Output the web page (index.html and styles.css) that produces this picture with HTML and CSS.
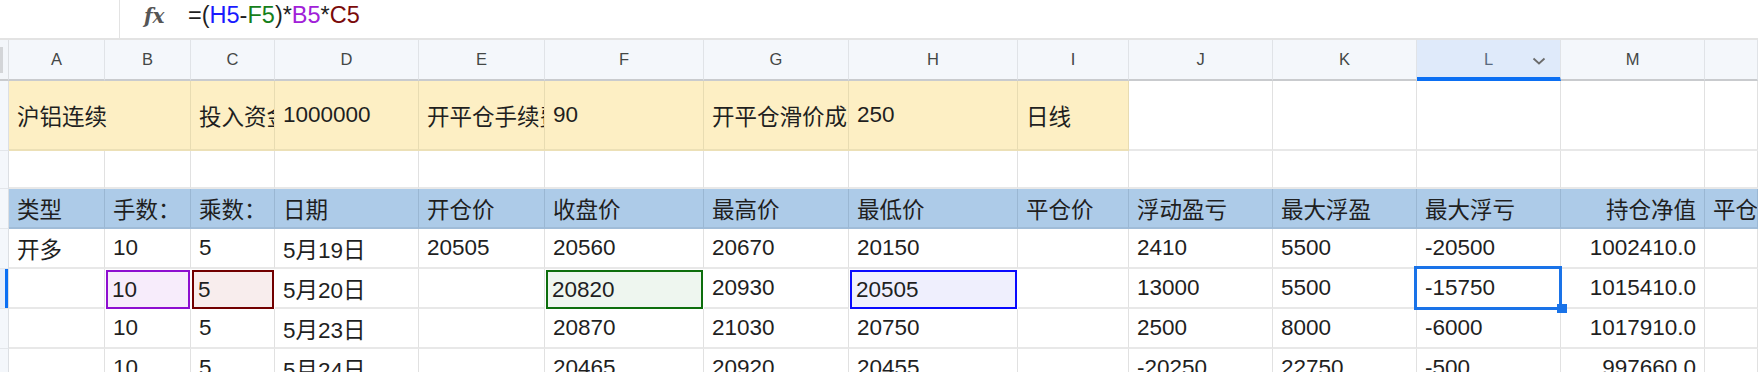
FILE: index.html
```html
<!DOCTYPE html>
<html lang="zh-CN">
<head>
  <meta charset="UTF-8" />
  <title>沪铝连续 - 表格</title>
  <link rel="stylesheet" href="styles.css">
</head>
<body>

<div class="formula-bar">
  <div class="name-box"></div>
  <div class="fx">fx</div>
  <div class="formula">=(<span class="ref-h">H5</span>-<span class="ref-f">F5</span>)*<span class="ref-b">B5</span>*<span class="ref-c">C5</span></div>
</div>

<div class="sheet">
  <!-- column headers -->
  <div class="corner"><span class="grip"></span></div>
  <div class="colhead">A</div>
  <div class="colhead">B</div>
  <div class="colhead">C</div>
  <div class="colhead">D</div>
  <div class="colhead">E</div>
  <div class="colhead">F</div>
  <div class="colhead">G</div>
  <div class="colhead">H</div>
  <div class="colhead">I</div>
  <div class="colhead">J</div>
  <div class="colhead">K</div>
  <div class="colhead current">L
    <svg class="chevron" viewBox="0 0 14 8" width="14" height="8"><path d="M1.5 1.5 L7 6.5 L12.5 1.5" fill="none" stroke="#6b6b6b" stroke-width="1.8"/></svg>
  </div>
  <div class="colhead">M</div>
  <div class="colhead"></div>

  <!-- row 1 -->
  <div class="rh"></div>
  <div class="cell y span2">沪铝连续</div>
  <div class="cell y">投入资金：</div>
  <div class="cell y">1000000</div>
  <div class="cell y">开平仓手续费</div>
  <div class="cell y">90</div>
  <div class="cell y">开平仓滑价成本</div>
  <div class="cell y">250</div>
  <div class="cell y">日线</div>
  <div class="cell"></div>
  <div class="cell"></div>
  <div class="cell"></div>
  <div class="cell"></div>
  <div class="cell"></div>

  <!-- row 2 -->
  <div class="rh"></div>
  <div class="cell"></div>
  <div class="cell"></div>
  <div class="cell"></div>
  <div class="cell"></div>
  <div class="cell"></div>
  <div class="cell"></div>
  <div class="cell"></div>
  <div class="cell"></div>
  <div class="cell"></div>
  <div class="cell"></div>
  <div class="cell"></div>
  <div class="cell"></div>
  <div class="cell"></div>
  <div class="cell"></div>

  <!-- row 3: titles -->
  <div class="rh"></div>
  <div class="cell b">类型</div>
  <div class="cell b">手数：</div>
  <div class="cell b">乘数：</div>
  <div class="cell b">日期</div>
  <div class="cell b">开仓价</div>
  <div class="cell b">收盘价</div>
  <div class="cell b">最高价</div>
  <div class="cell b">最低价</div>
  <div class="cell b">平仓价</div>
  <div class="cell b">浮动盈亏</div>
  <div class="cell b">最大浮盈</div>
  <div class="cell b">最大浮亏</div>
  <div class="cell b num">持仓净值</div>
  <div class="cell b">平仓盈亏</div>

  <!-- row 4 -->
  <div class="rh"></div>
  <div class="cell">开多</div>
  <div class="cell">10</div>
  <div class="cell">5</div>
  <div class="cell">5月19日</div>
  <div class="cell">20505</div>
  <div class="cell">20560</div>
  <div class="cell">20670</div>
  <div class="cell">20150</div>
  <div class="cell"></div>
  <div class="cell">2410</div>
  <div class="cell">5500</div>
  <div class="cell">-20500</div>
  <div class="cell num">1002410.0</div>
  <div class="cell"></div>

  <!-- row 5 -->
  <div class="rh current"></div>
  <div class="cell"></div>
  <div class="cell ref ref-purple">10</div>
  <div class="cell ref ref-red">5</div>
  <div class="cell">5月20日</div>
  <div class="cell"></div>
  <div class="cell ref ref-green">20820</div>
  <div class="cell">20930</div>
  <div class="cell ref ref-blue">20505</div>
  <div class="cell"></div>
  <div class="cell">13000</div>
  <div class="cell">5500</div>
  <div class="cell active">-15750</div>
  <div class="cell num">1015410.0</div>
  <div class="cell"></div>

  <!-- row 6 -->
  <div class="rh"></div>
  <div class="cell"></div>
  <div class="cell">10</div>
  <div class="cell">5</div>
  <div class="cell">5月23日</div>
  <div class="cell"></div>
  <div class="cell">20870</div>
  <div class="cell">21030</div>
  <div class="cell">20750</div>
  <div class="cell"></div>
  <div class="cell">2500</div>
  <div class="cell">8000</div>
  <div class="cell">-6000</div>
  <div class="cell num">1017910.0</div>
  <div class="cell"></div>

  <!-- row 7 -->
  <div class="rh"></div>
  <div class="cell"></div>
  <div class="cell">10</div>
  <div class="cell">5</div>
  <div class="cell">5月24日</div>
  <div class="cell"></div>
  <div class="cell">20465</div>
  <div class="cell">20920</div>
  <div class="cell">20455</div>
  <div class="cell"></div>
  <div class="cell">-20250</div>
  <div class="cell">22750</div>
  <div class="cell">-500</div>
  <div class="cell num">997660.0</div>
  <div class="cell"></div>
</div>

</body>
</html>
```

FILE: styles.css
```css
/* Reset and base styles */
* {
  box-sizing: border-box;
  margin: 0;
  padding: 0;
}

body {
  font-family: 'Liberation Sans', Arial, 'Noto Sans CJK SC', sans-serif;
  color: #1f1f1f;
  background: #fff;
  overflow: hidden;
  width: 1758px;
  height: 372px;
}

/* Formula bar */
.formula-bar {
  display: flex;
  align-items: center;
  height: 40px;
  border-bottom: 2px solid #e3e3e3;
}

.name-box {
  width: 120px;
  height: 100%;
  border-right: 1px solid #e3e3e3;
}

.fx {
  margin-left: 24px;
  width: 44px;
  padding-bottom: 6px;
  font-family: 'DejaVu Serif', 'Liberation Serif', serif;
  font-style: italic;
  font-weight: bold;
  font-size: 20px;
  color: #555;
}

.formula {
  padding-bottom: 7px;
  font-size: 23.5px;
  color: #1f1f1f;
}

.ref-h { color: #1a1aff; }
.ref-f { color: #15801a; }
.ref-b { color: #a120d8; }
.ref-c { color: #7a0a0a; }

/* Sheet grid */
.sheet {
  display: grid;
  grid-template-columns: 9px 96px 86px 84px 144px 126px 159px 145px 169px 111px 144px 144px 144px 144px 1fr;
  grid-template-rows: 41px 70px 38px 40px 40px 40px 40px 40px;
}

.corner {
  background: #f3f6fa;
  border-bottom: 2px solid #c9cbce;
  border-right: 1px solid #dcdfe3;
}

.grip {
  display: block;
  width: 3px;
  height: 26px;
  margin-top: 7px;
  background: #d3d5d8;
}

.colhead {
  display: flex;
  align-items: center;
  justify-content: center;
  position: relative;
  background: #f4f7fb;
  border-right: 1px solid #e0e3e7;
  border-bottom: 2px solid #c9cbce;
  font-size: 16.5px;
  color: #444746;
}

.colhead.current {
  background: #dfeafa;
  color: #5a6a80;
  border-bottom: 4px solid #0b6ff3;
  padding-top: 2px;
}

.chevron {
  position: absolute;
  right: 14px;
  top: 17px;
}

.rh {
  background: #f4f7fb;
  border-right: 1px solid #dcdfe3;
  border-bottom: 1px solid #e3e6ea;
}

.rh.current {
  background: #e6eefb;
  box-shadow: inset -3px 0 0 #0b6ff3;
}

.cell {
  display: flex;
  align-items: center;
  padding: 0 8px;
  border-right: 1px solid #e1e1e1;
  border-bottom: 2px solid #e8e8e8;
  font-size: 22.5px;
  white-space: nowrap;
  overflow: hidden;
}

.span2 {
  grid-column: span 2;
}

.cell.y {
  background: #fdefc4;
  border-right-color: #e8dcb2;
  border-bottom-color: #ece0b6;
}

.cell.b {
  background: #adcbe8;
  border-right-color: #9ab7d3;
  border-bottom-color: #a0bcd8;
}

.cell.num {
  justify-content: flex-end;
}

/* Formula reference boxes */
.ref {
  border: 2px solid;
  margin: 1px 1px 0 1px;
  padding-left: 4px;
}

.ref-purple { border-color: #8e0fd0; background: #f7ecfb; }
.ref-red { border-color: #720000; background: #f8eded; }
.ref-green { border-color: #0d6e0d; background: #eef6ef; }
.ref-blue { border-color: #0a0aff; background: #efeffd; }

/* Active cell */
.cell.active {
  position: relative;
  overflow: visible;
}

.cell.active::after {
  content: '';
  position: absolute;
  left: -3px;
  right: -2px;
  top: -3px;
  bottom: -3px;
  border: 3px solid #1a73e8;
}

.cell.active::before {
  content: '';
  position: absolute;
  right: -7px;
  bottom: -6px;
  width: 10px;
  height: 9px;
  background: #1a73e8;
  z-index: 2;
}
```
